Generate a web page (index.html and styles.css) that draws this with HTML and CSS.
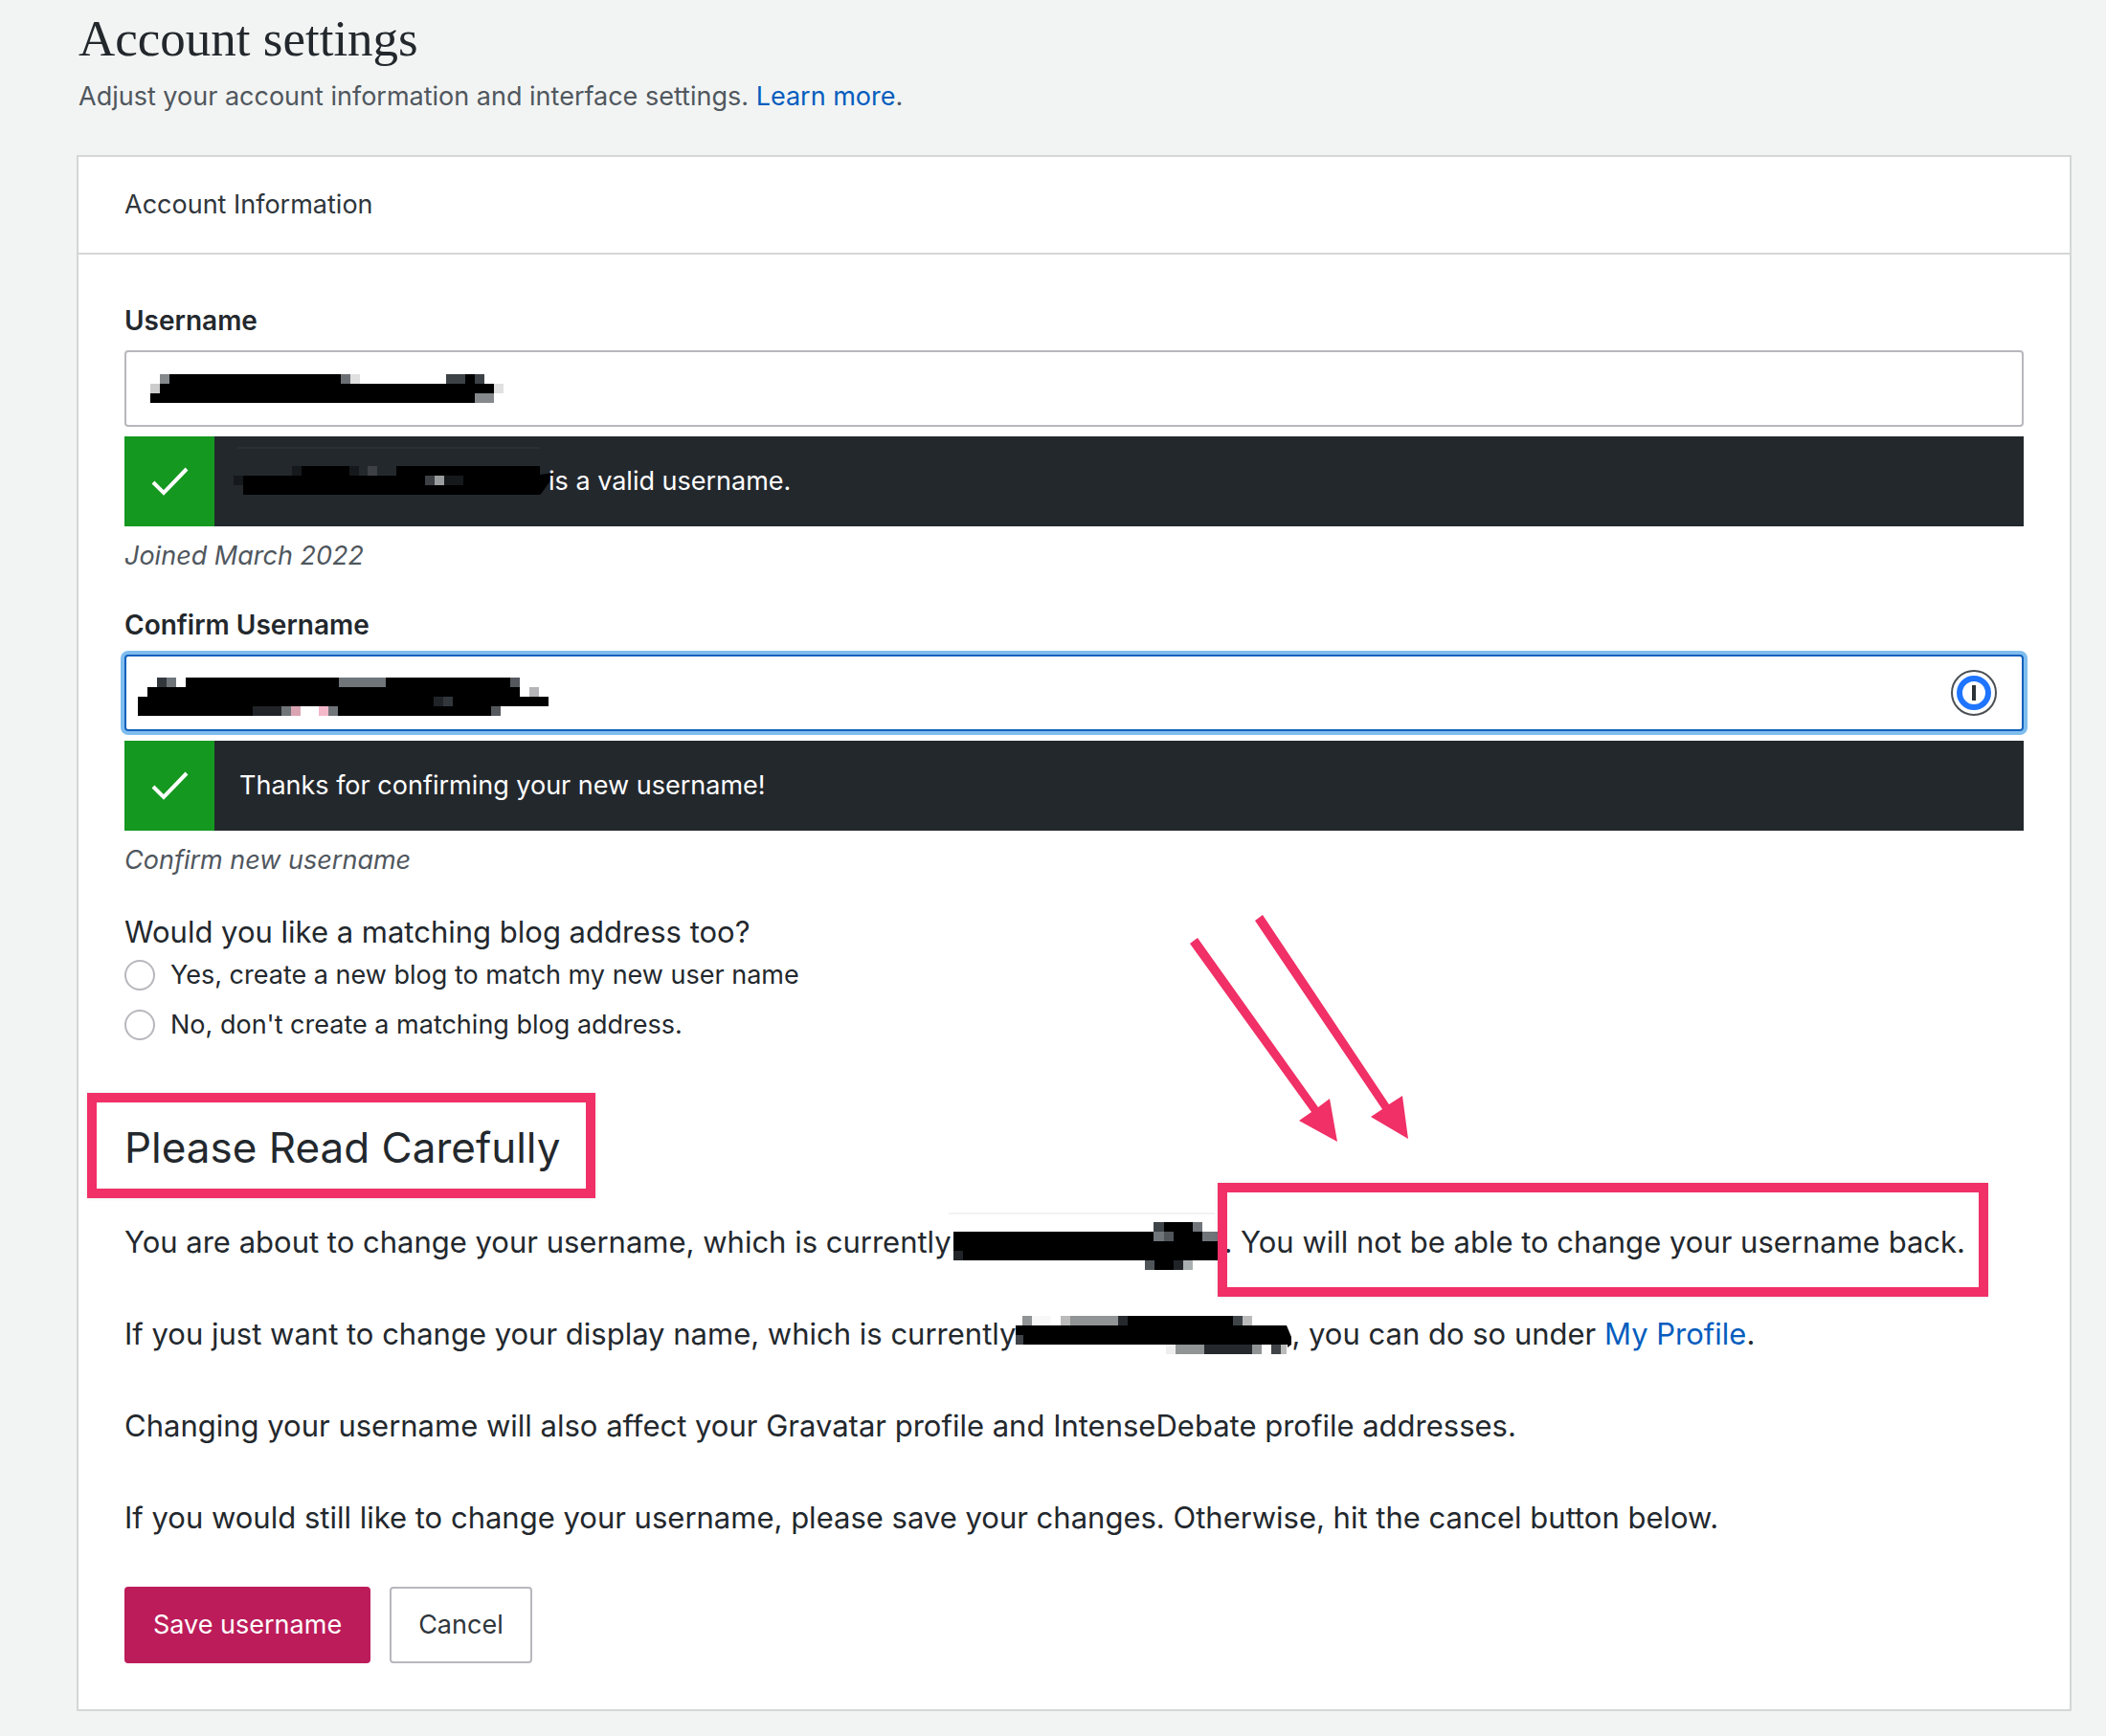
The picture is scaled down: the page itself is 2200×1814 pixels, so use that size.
FILE: index.html
```html
<!DOCTYPE html>
<html lang="en">

<head>
  <meta charset="UTF-8">
  <meta name="viewport" content="width=device-width, initial-scale=1.0">
  <title>Account settings</title>
  <link rel="stylesheet" href="styles.css">
</head>

<body>
  <main class="page">
    <header class="page-header">
      <h1>Account settings</h1>
      <p>Adjust your account information and interface settings. <a href="#">Learn more</a>.</p>
    </header>

    <section class="card">
      <h2 class="card-header">Account Information</h2>

      <form class="card-body">
        <!-- Username -->
        <div class="field">
          <label for="username">Username</label>
          <div class="input-wrap">
            <input type="text" id="username">
            <svg class="redacted redacted-input" width="370" height="30" viewBox="0 0 370 30" shape-rendering="crispEdges">
              <path d="M20 0H199V10H359V20H339V30H0V20H10V10H20zM329 0h10v10h-10z" />
              <path fill="#85898b" d="M10 0h10v10H10zM339 20h20v10h-20z" />
              <path fill="#6b6e72" d="M199 0h10v10h-10z" />
              <path fill="#e0e0e0" d="M209 0h10v10h-10zM359 10h10v10h-10z" />
              <path fill="#cccccc" d="M0 10h10v10H0z" />
              <path fill="#3d4247" d="M309 0h20v10h-20zM339 0h10v10h-10z" />
            </svg>
          </div>
          <div class="notice">
            <span class="notice-icon">
              <svg width="40" height="30" viewBox="0 0 40 30"><path d="M3 16L14 27L38 2" /></svg>
            </span>
            <span class="notice-text">
              <svg class="redacted redacted-notice" width="334" height="50" viewBox="0 0 334 50">
                <path fill="#2b3034" d="M4 0h316v2H4z" />
                <path d="M61 20H131V30H170V20H320V29L334 27V31L322 48L320 50H10V30H61z" />
                <path fill="#16191c" d="M61 20h10v10H61zM121 20h10v10h-10zM0 30h10v10H0zM220 30h20v10h-20z" />
                <path fill="#3d4044" d="M140 20h10v10h-10zM200 30h10v10h-10z" />
                <path fill="#999d9e" d="M210 30h10v10h-10z" />
              </svg>is a valid username.
            </span>
          </div>
          <p class="hint">Joined March 2022</p>
        </div>

        <!-- Confirm username -->
        <div class="field">
          <label for="confirm-username">Confirm Username</label>
          <div class="input-wrap">
            <input type="text" id="confirm-username" class="is-focused">
            <svg class="redacted redacted-confirm" width="430" height="40" viewBox="0 0 430 40" shape-rendering="crispEdges">
              <path d="M50 0H389V10H399V20H429V30H379V40H0V20H10V10H50z" />
              <path fill="#32373c" d="M20 0h10v10H20zM319 20h10v10h-10z" />
              <path fill="#70757a" d="M30 0h10v10H30zM210 0h49v10h-49zM150 30h10v10h-10zM199 30h10v10h-10z" />
              <path fill="#55595e" d="M389 0h10v10h-10zM369 30h10v10h-10z" />
              <path fill="#b5b5b8" d="M409 10h10v10h-10z" />
              <path fill="#202428" d="M309 20h10v10h-10zM120 30h30v10h-30z" />
              <path fill="#d9a3b2" d="M160 30h10v10h-10z" />
              <path fill="#ffffff" d="M170 30h19v10h-19z" />
              <path fill="#f4b8cb" d="M189 30h10v10h-10z" />
            </svg>
            <svg class="password-icon" width="48" height="48" viewBox="0 0 48 48">
              <circle cx="24" cy="24" r="23" fill="#fff" stroke="#4b5054" stroke-width="2" />
              <circle cx="24" cy="24" r="15" fill="none" stroke="#1f75ff" stroke-width="6" />
              <path fill="#2b3338" d="M22 16h4v16h-4z" />
            </svg>
          </div>
          <div class="notice">
            <span class="notice-icon">
              <svg width="40" height="30" viewBox="0 0 40 30"><path d="M3 16L14 27L38 2" /></svg>
            </span>
            <span class="notice-text">Thanks for confirming your new username!</span>
          </div>
          <p class="hint">Confirm new username</p>
        </div>

        <!-- Blog address -->
        <fieldset class="blog-address">
          <legend>Would you like a matching blog address too?</legend>
          <label><input type="radio" name="blog">Yes, create a new blog to match my new user name</label>
          <label><input type="radio" name="blog">No, don't create a matching blog address.</label>
        </fieldset>

        <!-- Warning -->
        <div class="warning">
          <h3>Please Read Carefully</h3>
          <p>You are about to change your username, which is currently
            <svg class="redacted redacted-current" width="296" height="60" viewBox="0 0 296 60" shape-rendering="crispEdges">
              <path fill="#f2f2f2" d="M5 0h278v2H5z" />
              <path d="M10 20H219V10H260V20H286V25H296V50H260V60H210V50H10z" />
              <path fill="#3f4448" d="M219 10h11v10h-11z" />
              <path fill="#70757a" d="M260 10h10v10h-10zM219 20h11v10h-11zM270 20h16v10h-16z" />
              <path fill="#50555a" d="M230 20h10v10h-10zM210 50h10v10h-10z" />
              <path fill="#202428" d="M10 40h10v10H10zM240 50h10v10h-10z" />
              <path fill="#aab0b2" d="M250 50h10v10h-10z" />
            </svg>. <span class="marked">You will not be able to change your username back.
              <svg class="arrows" width="240" height="250" viewBox="0 0 240 250">
                <path d="M5 36L13 30L139 207L151 198L159 243L119 221L132 212z" />
                <path d="M73 12L81 6L213 204L227 195L233 240L194 217L206 209z" />
              </svg></span></p>
          <p>If you just want to change your display name, which is currently<svg class="redacted redacted-display" width="288" height="40" viewBox="12 0 288 40">
              <path d="M129 0H249V10H295L300 22V30L296 33V30H0V10H129z" />
              <path fill="#909495" d="M19 0h10v10H19zM69 0h50v10H69zM179 30h30v10h-30zM259 30h10v10h-10z" />
              <path fill="#f8f8f8" d="M29 0h20v10H29z" />
              <path fill="#bbbbbb" d="M59 0h10v10H59zM249 0h10v10h-10zM289 30h6v10h-6z" />
              <path fill="#25292d" d="M119 0h10v10h-10zM209 30h50v10h-50z" />
              <path fill="#3f4448" d="M239 0h10v10h-10zM12 20h8v10H12zM279 30h10v10h-10z" />
              <path fill="#eeeeee" d="M169 30h10v10h-10z" />
            </svg>, you can do so under <a href="#">My Profile</a>.</p>
          <p>Changing your username will also affect your Gravatar profile and IntenseDebate profile addresses.</p>
          <p>If you would still like to change your username, please save your changes. Otherwise, hit the cancel button below.</p>
        </div>

        <div class="actions">
          <button type="submit" class="button button-primary">Save username</button>
          <button type="button" class="button">Cancel</button>
        </div>
      </form>
    </section>
  </main>
</body>

</html>
```
FILE: styles.css
```css
*,
*::after {
  box-sizing: border-box;
  margin: 0;
  padding: 0;
}

body {
  background-color: #f2f4f3;
  color: #23282d;
  font-family: Inter, "Liberation Sans", sans-serif;
  font-size: 27px;
  line-height: 42px;
}

a {
  color: #055dbe;
  text-decoration: none;
}

.page {
  padding: 10px 36px 26px 80px;
}

.page-header {
  padding: 0 2px;
  margin-bottom: 40px;
  color: #50575e;
}

h1 {
  margin-bottom: 10px;
  color: #23282d;
  font-family: "Liberation Serif", serif;
  font-size: 53px;
  font-weight: 400;
  line-height: 60px;
}

.card {
  background-color: #ffffff;
  border: 2px solid #d5d6d6;
}

.card-header {
  padding: 29px 48px;
  border-bottom: 2px solid #d5d6d6;
  color: #2f363c;
  font-size: 27px;
  font-weight: 400;
}

.card-body {
  padding: 48px;
}

.field {
  margin-bottom: 30px;
}

.field label {
  display: block;
  margin-bottom: 10px;
  font-size: 28px;
  font-weight: 600;
}

.input-wrap {
  position: relative;
  margin-bottom: 10px;
}

input[type="text"] {
  display: block;
  width: 100%;
  height: 80px;
  padding: 0 26px;
  border: 2px solid #b8b7bd;
  border-radius: 4px;
  background-color: #ffffff;
  font: inherit;
}

input[type="text"].is-focused {
  border-color: #1160bd;
  box-shadow: 0 0 0 4px #7fbdee;
}

.redacted-input {
  position: absolute;
  top: 25px;
  left: 27px;
}

.redacted-confirm {
  position: absolute;
  top: 24px;
  left: 14px;
}

.password-icon {
  position: absolute;
  top: 16px;
  right: 28px;
}

.notice {
  display: flex;
  height: 94px;
  margin-bottom: 10px;
  background-color: #23282d;
  color: #ffffff;
}

.notice-icon {
  display: flex;
  align-items: center;
  justify-content: center;
  width: 94px;
  background-color: #149820;
}

.notice-icon path {
  fill: none;
  stroke: #ffffff;
  stroke-width: 4;
}

.notice-text {
  display: flex;
  align-items: center;
  padding-left: 26px;
}

.redacted-notice {
  margin: -22px -5px 0 -6px;
}

.hint {
  color: #50575e;
  font-style: italic;
}

.blog-address {
  border: none;
}

.blog-address legend {
  font-size: 31px;
  line-height: 48px;
}

.blog-address label {
  display: flex;
  align-items: center;
  margin-bottom: 10px;
}

input[type="radio"] {
  appearance: none;
  width: 32px;
  height: 32px;
  margin-right: 16px;
  border: 2px solid #b8b7bd;
  border-radius: 50%;
  background-color: #ffffff;
}

.warning {
  margin-top: 68px;
  font-size: 31px;
  line-height: 48px;
}

.warning h3 {
  position: relative;
  margin-bottom: 46px;
  font-size: 44px;
  font-weight: 400;
  line-height: 58px;
}

.warning p {
  margin-bottom: 48px;
}

/* pink highlight boxes */
.warning h3::after,
.marked::after {
  content: "";
  position: absolute;
  border: 10px solid #f03066;
  box-shadow: 0 0 4px rgba(0, 0, 0, 0.1);
}

.warning h3::after {
  top: -28px;
  left: -39px;
  width: 531px;
  height: 110px;
}

.marked {
  display: inline-block;
  position: relative;
}

.marked::after {
  top: -38px;
  left: -24px;
  right: -24px;
  height: 119px;
}

.arrows {
  position: absolute;
  top: -324px;
  left: -58px;
  fill: #f03066;
}

.redacted-current {
  margin: -20px -4px -20px -16px;
  vertical-align: 2px;
}

.redacted-display {
  margin: -10px 0;
}

.actions {
  display: flex;
  gap: 20px;
}

.button {
  height: 80px;
  padding: 0 28px;
  border: 2px solid #b8b7bd;
  border-radius: 4px;
  background-color: #ffffff;
  color: #2f363c;
  font: inherit;
  cursor: pointer;
}

.button-primary {
  border-color: #bc1c5a;
  background-color: #bc1c5a;
  color: #ffffff;
}
```
